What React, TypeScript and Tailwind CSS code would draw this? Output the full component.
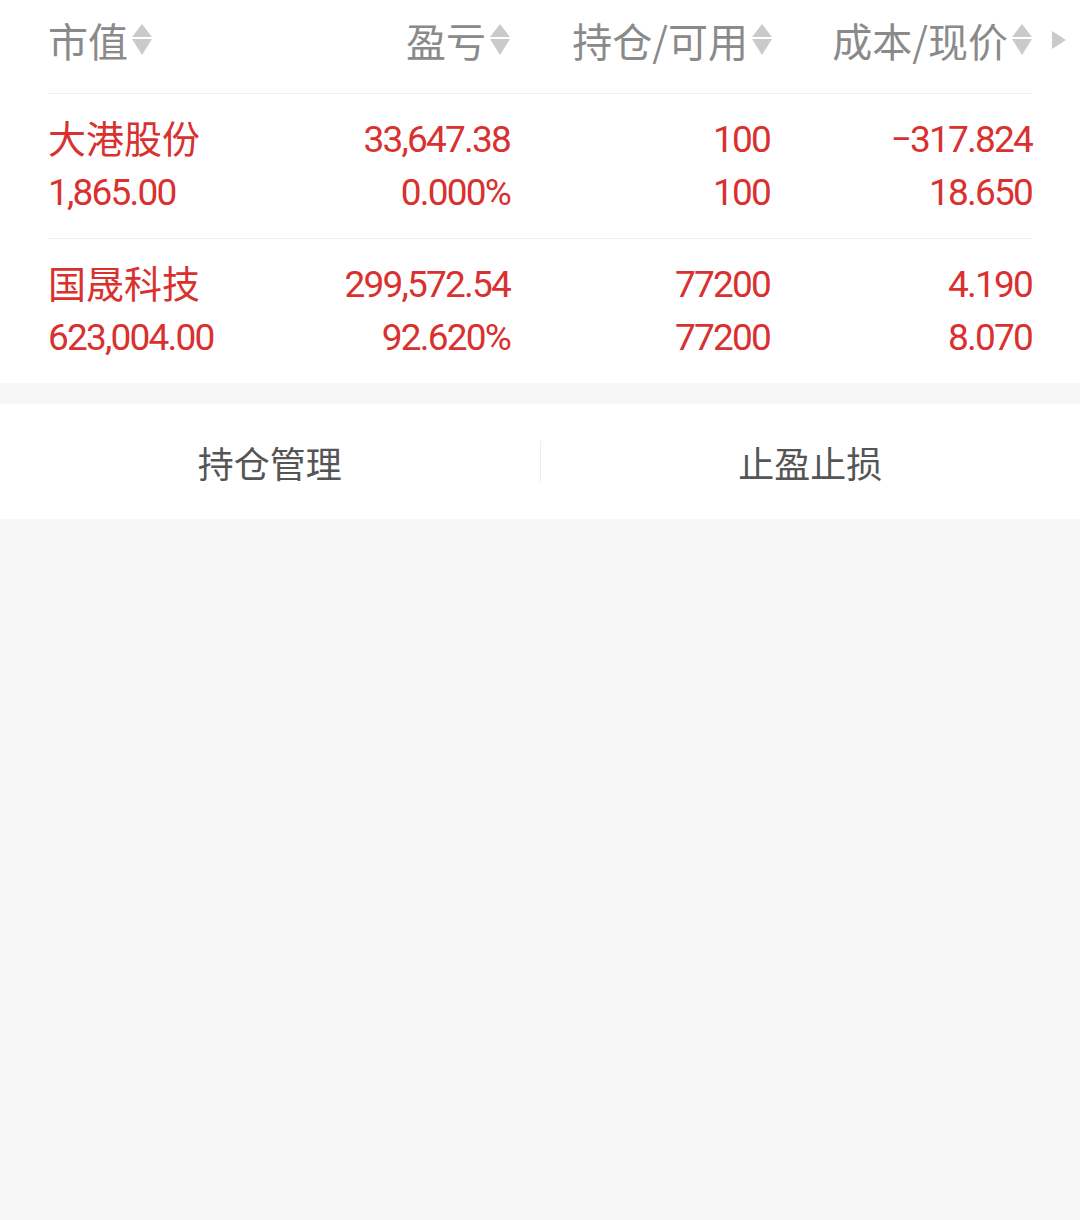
import { ReactNode } from "react";

interface Holding {
  name: string;
  marketValue: string;
  profit: string;
  profitRate: string;
  position: string;
  available: string;
  cost: string;
  price: string;
}

const holdings: Holding[] = [
  {
    name: "大港股份",
    marketValue: "1,865.00",
    profit: "33,647.38",
    profitRate: "0.000%",
    position: "100",
    available: "100",
    cost: "−317.824",
    price: "18.650",
  },
  {
    name: "国晟科技",
    marketValue: "623,004.00",
    profit: "299,572.54",
    profitRate: "92.620%",
    position: "77200",
    available: "77200",
    cost: "4.190",
    price: "8.070",
  },
];

const cjk = "font-['Noto_Sans_CJK_SC','Noto_Sans',sans-serif]";
const num = "font-['Roboto',sans-serif] tracking-[-1.8px]";

function SortIcon() {
  return (
    <svg width="20" height="32" viewBox="0 0 20 32" className="ml-[4px] shrink-0">
      <polygon points="10,0 20,13 0,13" fill="#cacaca" />
      <polygon points="0,15 20,15 10,31" fill="#cacaca" />
    </svg>
  );
}

function HeadCell({ children, className }: { children: ReactNode; className: string }) {
  return (
    <div className={`flex items-center ${className}`}>
      <span className="text-[40px] leading-none text-[#8a8a8a]">{children}</span>
      <SortIcon />
    </div>
  );
}

function App() {
  return (
    <div className={`min-h-[1220px] w-[1080px] bg-[#f6f6f6] ${cjk}`}>
      <div className="bg-white">
        {/* header */}
        <div className="flex h-[93px] items-center pb-[13px] pl-[48px]">
          <HeadCell className="w-[200px]">市值</HeadCell>
          <HeadCell className="w-[262px] justify-end">盈亏</HeadCell>
          <HeadCell className="w-[262px] justify-end">持仓/可用</HeadCell>
          <HeadCell className="w-[260px] justify-end">成本/现价</HeadCell>
          <div className="flex w-[48px] justify-end pr-[14px]">
            <svg width="14" height="18" viewBox="0 0 14 18">
              <polygon points="0,0 14,9 0,18" fill="#cacaca" />
            </svg>
          </div>
        </div>

        <div className="px-[48px]">
          {holdings.map((h) => (
            <div
              key={h.name}
              className="flex border-t border-[#eeeeee] py-[19px] leading-[53px] text-[#d8312f]"
            >
              <div className="w-[200px]">
                <div className="-mt-[3px] mb-[3px] text-[38px]">{h.name}</div>
                <div className={`text-[37px] ${num}`}>{h.marketValue}</div>
              </div>
              <div className={`w-[262px] text-right text-[37px] ${num}`}>
                <div>{h.profit}</div>
                <div>{h.profitRate}</div>
              </div>
              <div className={`w-[260px] text-right text-[37px] ${num}`}>
                <div>{h.position}</div>
                <div>{h.available}</div>
              </div>
              <div className={`w-[262px] text-right text-[37px] ${num}`}>
                <div>{h.cost}</div>
                <div>{h.price}</div>
              </div>
            </div>
          ))}
        </div>
      </div>

      {/* actions */}
      <div className="mt-[21px] flex h-[115px] items-center bg-white text-[36px] text-[#555555]">
        <button className="flex-1 text-center">持仓管理</button>
        <div className="h-[42px] w-px bg-[#eeeeee]" />
        <button className="flex-1 text-center">止盈止损</button>
      </div>
    </div>
  );
}

export default App;
